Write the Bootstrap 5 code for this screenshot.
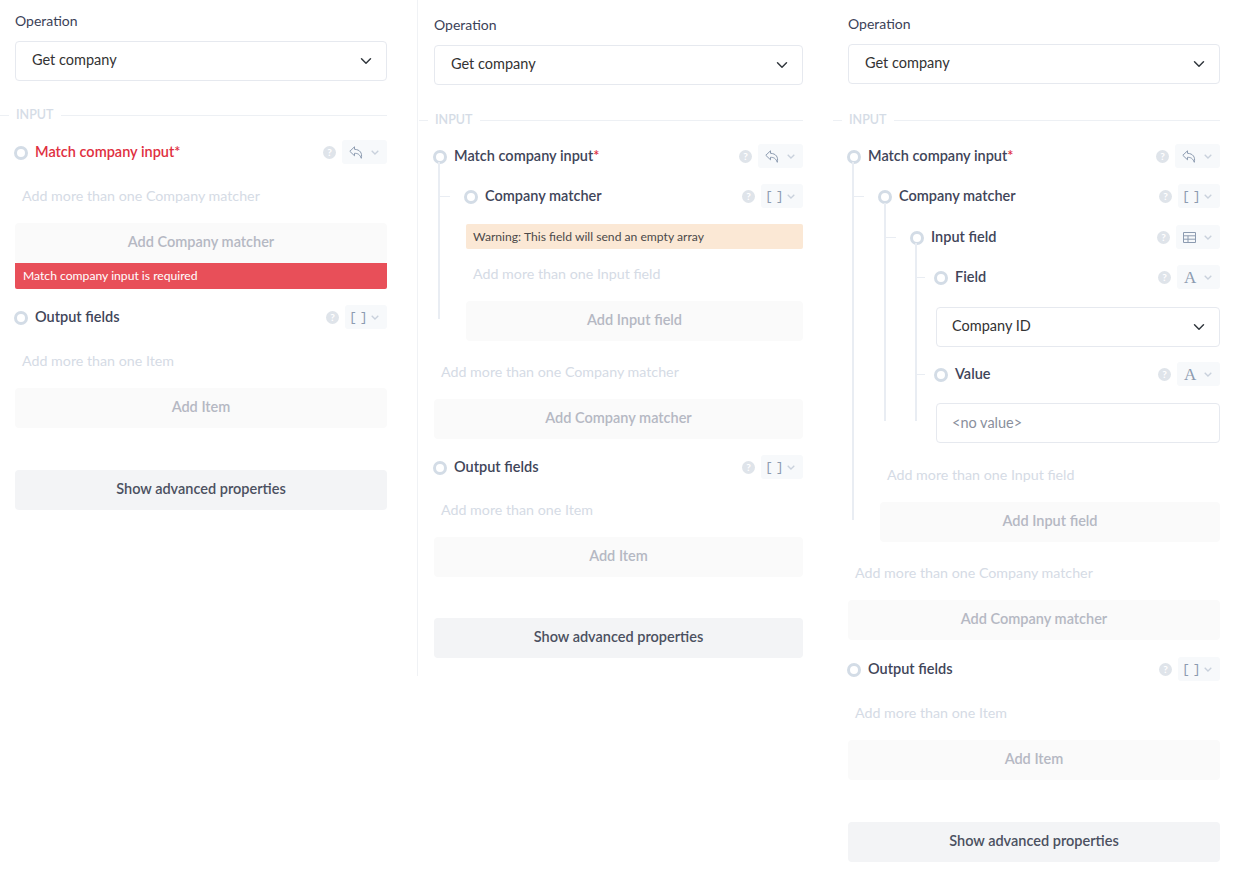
<!DOCTYPE html>
<html lang="en">
<head>
  <meta charset="UTF-8" />
  <title>Operation properties</title>
  <link href="https://cdn.jsdelivr.net/npm/bootstrap@5.3.3/dist/css/bootstrap.min.css" rel="stylesheet" />
  <style>
    body {
      font-family: Lato, "Open Sans", sans-serif;
      font-size: 14.5px;
      color: #3b4258;
      background: #fff;
    }
    .panel { flex: none; }
    .panel-a { width: 417px; padding: 12px 30px 0 15px; }
    .panel-b { width: 416px; padding: 16px 30px 0 16px; height: 676px; border-left: 1px solid #f0f2f5; }
    .panel-c { width: 401px; padding: 15px 14px 0 15px; }
    .op-label { line-height: 17px; margin-bottom: 12px; font-size: 14px; }
    .panel .form-select, .panel .form-control {
      height: 40px;
      border: 1px solid #e6e9ef;
      border-radius: 4px;
      padding: 0 16px 2px;
      font-size: 14.5px;
      color: #333;
      box-shadow: none;
    }
    .panel .form-control { color: #8a8f9c; }
    .section-title { margin: 26px 0 0 -15px; height: 16px; gap: 7px; font-size: 12.5px; font-weight: 600; color: #d5dce6; }
    .section-title i { display: block; height: 1px; background: #edf0f4; }
    .section-title i:first-child { width: 9px; }
    .section-title i:last-child { flex: 1; }
    .panel-b .section-title { margin-top: 27px; }
    .panel-c .section-title { margin-top: 28px; }
    .field-row { height: 24px; margin-top: 16px; }
    .node-dot { width: 14px; height: 14px; border: 3px solid #d3dce6; border-radius: 50%; margin: 2px 7px 0 -2px; flex: none; background: #fff; }
    .panel > .field-row .node-dot { margin-left: -1px; }
    .field-name { font-weight: 600; color: #3f4559; }
    .field-name.has-error { color: #e0303f; }
    .req { color: #e0303f; }
    .section-title + .field-row { margin-top: 16px; }
    .panel-a .section-title + .field-row { margin-top: 17px; }
    .panel-c > .add-btn + .field-row { margin-top: 17px; }
    .help-dot { width: 13px; height: 13px; border-radius: 50%; background: #dfe4ea; color: #fff; font-size: 10px; font-weight: 700; line-height: 13px; text-align: center; margin-right: 6px; }
    .type-chip { height: 24px; padding: 0 8px 0 7px; background: #f7f9fb; border-radius: 3px; gap: 8px; color: #8c9bb0; }
    .glyph-mono { font-family: "Liberation Mono", monospace; font-size: 13px; line-height: 1; white-space: nowrap; width: 14px; margin-left: -3px; letter-spacing: 3px; }
    .glyph-serif { font-family: "Liberation Serif", serif; font-size: 17px; line-height: 1; width: 12px; text-align: center; }
    .add-hint { color: #d5dbe5; font-size: 14.25px; margin: 0 0 0 7px; line-height: 18px; padding-top: 22px; }
    .field-row + .add-hint { padding-top: 23px; }
    .panel-b > .field-row + .add-hint { padding-top: 22px; }
    .warn-bar + .add-hint { padding-top: 16px; }
    .add-btn, .adv-btn {
      display: block;
      width: 100%;
      height: 40px;
      border: 0;
      border-radius: 4px;
      font-size: 14.5px;
      font-weight: 600;
      padding: 0 0 2px;
    }
    .add-btn, .add-btn:disabled { background: #fafafa; color: #b5b8c3; margin-top: 18px; opacity: 1; }
    .adv-btn { background: #f3f4f6; color: #4b5060; margin-top: 42px; }
    .panel-b .adv-btn { margin-top: 41px; }
    .error-bar { background: #e84f59; color: #fff; font-size: 12.15px; height: 26px; line-height: 26px; padding-left: 8px; border-radius: 0 0 2px 2px; }
    .warn-bar { background: #fbe8d5; color: #4c4a4a; font-size: 12.15px; height: 25px; line-height: 25px; padding-left: 7px; border-radius: 2px; margin-top: 16px; }
    .tree-kids { position: relative; margin-left: 32px; }
    .tree-kids.leaf { margin-left: 24px; }
    .tree-kids::before { content: ""; position: absolute; left: -28px; top: -22px; bottom: 22px; width: 2px; background: #e9edf3; }
    .tree-kids.leaf::before { left: -21px; }
    .branch { position: relative; margin-top: 16px; }
    .tree-kids > .tree-kids:not(.leaf) > .branch:first-child { margin-top: 17px; }
    .branch::before { content: ""; position: absolute; left: -27px; top: 12px; width: 11px; height: 1px; background: #e9edf3; }
    .tree-kids.leaf > .branch::before { left: -20px; width: 9px; }
    .panel .value-select { margin-top: 18px; padding-left: 15px; }
    .value-row { margin-top: 15px; }
    .panel .value-input { margin-top: 17px; padding-left: 15px; }
    .leaf-hint { padding-top: 23px; }
  </style>
</head>
<body>
  <main class="d-flex">

    <!-- required error -->
    <section class="panel panel-a">
      <div class="op-label">Operation</div>
      <select class="form-select"><option>Get company</option></select>
      <div class="section-title d-flex align-items-center"><i></i><span>INPUT</span><i></i></div>
      <div class="field-row d-flex align-items-center">
        <span class="node-dot"></span><span class="field-name has-error">Match company input*</span>
        <span class="help-dot ms-auto">?</span>
        <span class="type-chip d-flex align-items-center">
          <svg width="14" height="13" viewBox="0 0 14 13" fill="none" stroke="#8c9bb0" stroke-width="1" stroke-linejoin="round"><path d="M5.500.8.800 5.300l4.700 4.500V7.300c3.200 0 5.200.9 6.800 5C13.500 7 11 3.600 5.500 3.300z"/></svg>
          <svg width="8" height="5" viewBox="0 0 8 5" fill="none" stroke="#c9d1dc" stroke-width="1.300"><path d="m.7.7 3.300 3.300L7.300.7"/></svg>
        </span>
      </div>
      <p class="add-hint">Add more than one Company matcher</p>
      <button class="add-btn" disabled>Add Company matcher</button>
      <div class="error-bar">Match company input is required</div>
      <div class="field-row d-flex align-items-center">
        <span class="node-dot"></span><span class="field-name">Output fields</span>
        <span class="help-dot ms-auto">?</span>
        <span class="type-chip d-flex align-items-center"><span class="glyph-mono">[]</span>
          <svg width="8" height="5" viewBox="0 0 8 5" fill="none" stroke="#c9d1dc" stroke-width="1.300"><path d="m.7.7 3.300 3.300L7.300.7"/></svg>
        </span>
      </div>
      <p class="add-hint">Add more than one Item</p>
      <button class="add-btn" disabled>Add Item</button>
      <button class="adv-btn">Show advanced properties</button>
    </section>

    <!-- empty array warning -->
    <section class="panel panel-b">
      <div class="op-label">Operation</div>
      <select class="form-select"><option>Get company</option></select>
      <div class="section-title d-flex align-items-center"><i></i><span>INPUT</span><i></i></div>
      <div class="field-row d-flex align-items-center">
        <span class="node-dot"></span><span class="field-name">Match company input<span class="req">*</span></span>
        <span class="help-dot ms-auto">?</span>
        <span class="type-chip d-flex align-items-center">
          <svg width="14" height="13" viewBox="0 0 14 13" fill="none" stroke="#8c9bb0" stroke-width="1" stroke-linejoin="round"><path d="M5.500.8.800 5.300l4.700 4.500V7.300c3.200 0 5.200.9 6.800 5C13.500 7 11 3.600 5.500 3.300z"/></svg>
          <svg width="8" height="5" viewBox="0 0 8 5" fill="none" stroke="#c9d1dc" stroke-width="1.300"><path d="m.7.7 3.300 3.300L7.300.7"/></svg>
        </span>
      </div>
      <div class="tree-kids">
        <div class="branch field-row d-flex align-items-center">
          <span class="node-dot"></span><span class="field-name">Company matcher</span>
          <span class="help-dot ms-auto">?</span>
          <span class="type-chip d-flex align-items-center"><span class="glyph-mono">[]</span>
            <svg width="8" height="5" viewBox="0 0 8 5" fill="none" stroke="#c9d1dc" stroke-width="1.300"><path d="m.7.7 3.300 3.300L7.300.7"/></svg>
          </span>
        </div>
        <div class="warn-bar">Warning: This field will send an empty array</div>
        <p class="add-hint">Add more than one Input field</p>
        <button class="add-btn" disabled>Add Input field</button>
      </div>
      <p class="add-hint">Add more than one Company matcher</p>
      <button class="add-btn" disabled>Add Company matcher</button>
      <div class="field-row d-flex align-items-center">
        <span class="node-dot"></span><span class="field-name">Output fields</span>
        <span class="help-dot ms-auto">?</span>
        <span class="type-chip d-flex align-items-center"><span class="glyph-mono">[]</span>
          <svg width="8" height="5" viewBox="0 0 8 5" fill="none" stroke="#c9d1dc" stroke-width="1.300"><path d="m.7.7 3.300 3.300L7.300.7"/></svg>
        </span>
      </div>
      <p class="add-hint">Add more than one Item</p>
      <button class="add-btn" disabled>Add Item</button>
      <button class="adv-btn">Show advanced properties</button>
    </section>

    <!-- fully expanded -->
    <section class="panel panel-c">
      <div class="op-label">Operation</div>
      <select class="form-select"><option>Get company</option></select>
      <div class="section-title d-flex align-items-center"><i></i><span>INPUT</span><i></i></div>
      <div class="field-row d-flex align-items-center">
        <span class="node-dot"></span><span class="field-name">Match company input<span class="req">*</span></span>
        <span class="help-dot ms-auto">?</span>
        <span class="type-chip d-flex align-items-center">
          <svg width="14" height="13" viewBox="0 0 14 13" fill="none" stroke="#8c9bb0" stroke-width="1" stroke-linejoin="round"><path d="M5.500.8.800 5.300l4.700 4.500V7.300c3.200 0 5.200.9 6.800 5C13.500 7 11 3.600 5.500 3.300z"/></svg>
          <svg width="8" height="5" viewBox="0 0 8 5" fill="none" stroke="#c9d1dc" stroke-width="1.300"><path d="m.7.7 3.300 3.300L7.300.7"/></svg>
        </span>
      </div>
      <div class="tree-kids">
        <div class="branch field-row d-flex align-items-center">
          <span class="node-dot"></span><span class="field-name">Company matcher</span>
          <span class="help-dot ms-auto">?</span>
          <span class="type-chip d-flex align-items-center"><span class="glyph-mono">[]</span>
            <svg width="8" height="5" viewBox="0 0 8 5" fill="none" stroke="#c9d1dc" stroke-width="1.300"><path d="m.7.7 3.300 3.300L7.300.7"/></svg>
          </span>
        </div>
        <div class="tree-kids">
          <div class="branch field-row d-flex align-items-center">
            <span class="node-dot"></span><span class="field-name">Input field</span>
            <span class="help-dot ms-auto">?</span>
            <span class="type-chip d-flex align-items-center">
              <svg width="13" height="11" viewBox="0 0 13 11" fill="none" stroke="#8c9bb0" stroke-width="1"><path d="M.5.5h12v10H.5zM.5 3.800h12M.5 7.200h12M5 3.800v6.700"/></svg>
              <svg width="8" height="5" viewBox="0 0 8 5" fill="none" stroke="#c9d1dc" stroke-width="1.300"><path d="m.7.7 3.300 3.300L7.300.7"/></svg>
            </span>
          </div>
          <div class="tree-kids leaf">
            <div class="branch field-row d-flex align-items-center">
              <span class="node-dot"></span><span class="field-name">Field</span>
              <span class="help-dot ms-auto">?</span>
              <span class="type-chip d-flex align-items-center"><span class="glyph-serif">A</span>
                <svg width="8" height="5" viewBox="0 0 8 5" fill="none" stroke="#c9d1dc" stroke-width="1.300"><path d="m.7.7 3.300 3.300L7.300.7"/></svg>
              </span>
            </div>
            <select class="form-select value-select"><option>Company ID</option></select>
            <div class="branch value-row field-row d-flex align-items-center">
              <span class="node-dot"></span><span class="field-name">Value</span>
              <span class="help-dot ms-auto">?</span>
              <span class="type-chip d-flex align-items-center"><span class="glyph-serif">A</span>
                <svg width="8" height="5" viewBox="0 0 8 5" fill="none" stroke="#c9d1dc" stroke-width="1.300"><path d="m.7.7 3.300 3.300L7.300.7"/></svg>
              </span>
            </div>
            <input class="form-control value-input" value="<no value>" />
          </div>
        </div>
        <p class="add-hint leaf-hint">Add more than one Input field</p>
        <button class="add-btn" disabled>Add Input field</button>
      </div>
      <p class="add-hint">Add more than one Company matcher</p>
      <button class="add-btn" disabled>Add Company matcher</button>
      <div class="field-row d-flex align-items-center">
        <span class="node-dot"></span><span class="field-name">Output fields</span>
        <span class="help-dot ms-auto">?</span>
        <span class="type-chip d-flex align-items-center"><span class="glyph-mono">[]</span>
          <svg width="8" height="5" viewBox="0 0 8 5" fill="none" stroke="#c9d1dc" stroke-width="1.300"><path d="m.7.7 3.300 3.300L7.300.7"/></svg>
        </span>
      </div>
      <p class="add-hint">Add more than one Item</p>
      <button class="add-btn" disabled>Add Item</button>
      <button class="adv-btn">Show advanced properties</button>
    </section>
  </main>
  <script src="https://cdn.jsdelivr.net/npm/bootstrap@5.3.3/dist/js/bootstrap.bundle.min.js"></script>
</body>
</html>
